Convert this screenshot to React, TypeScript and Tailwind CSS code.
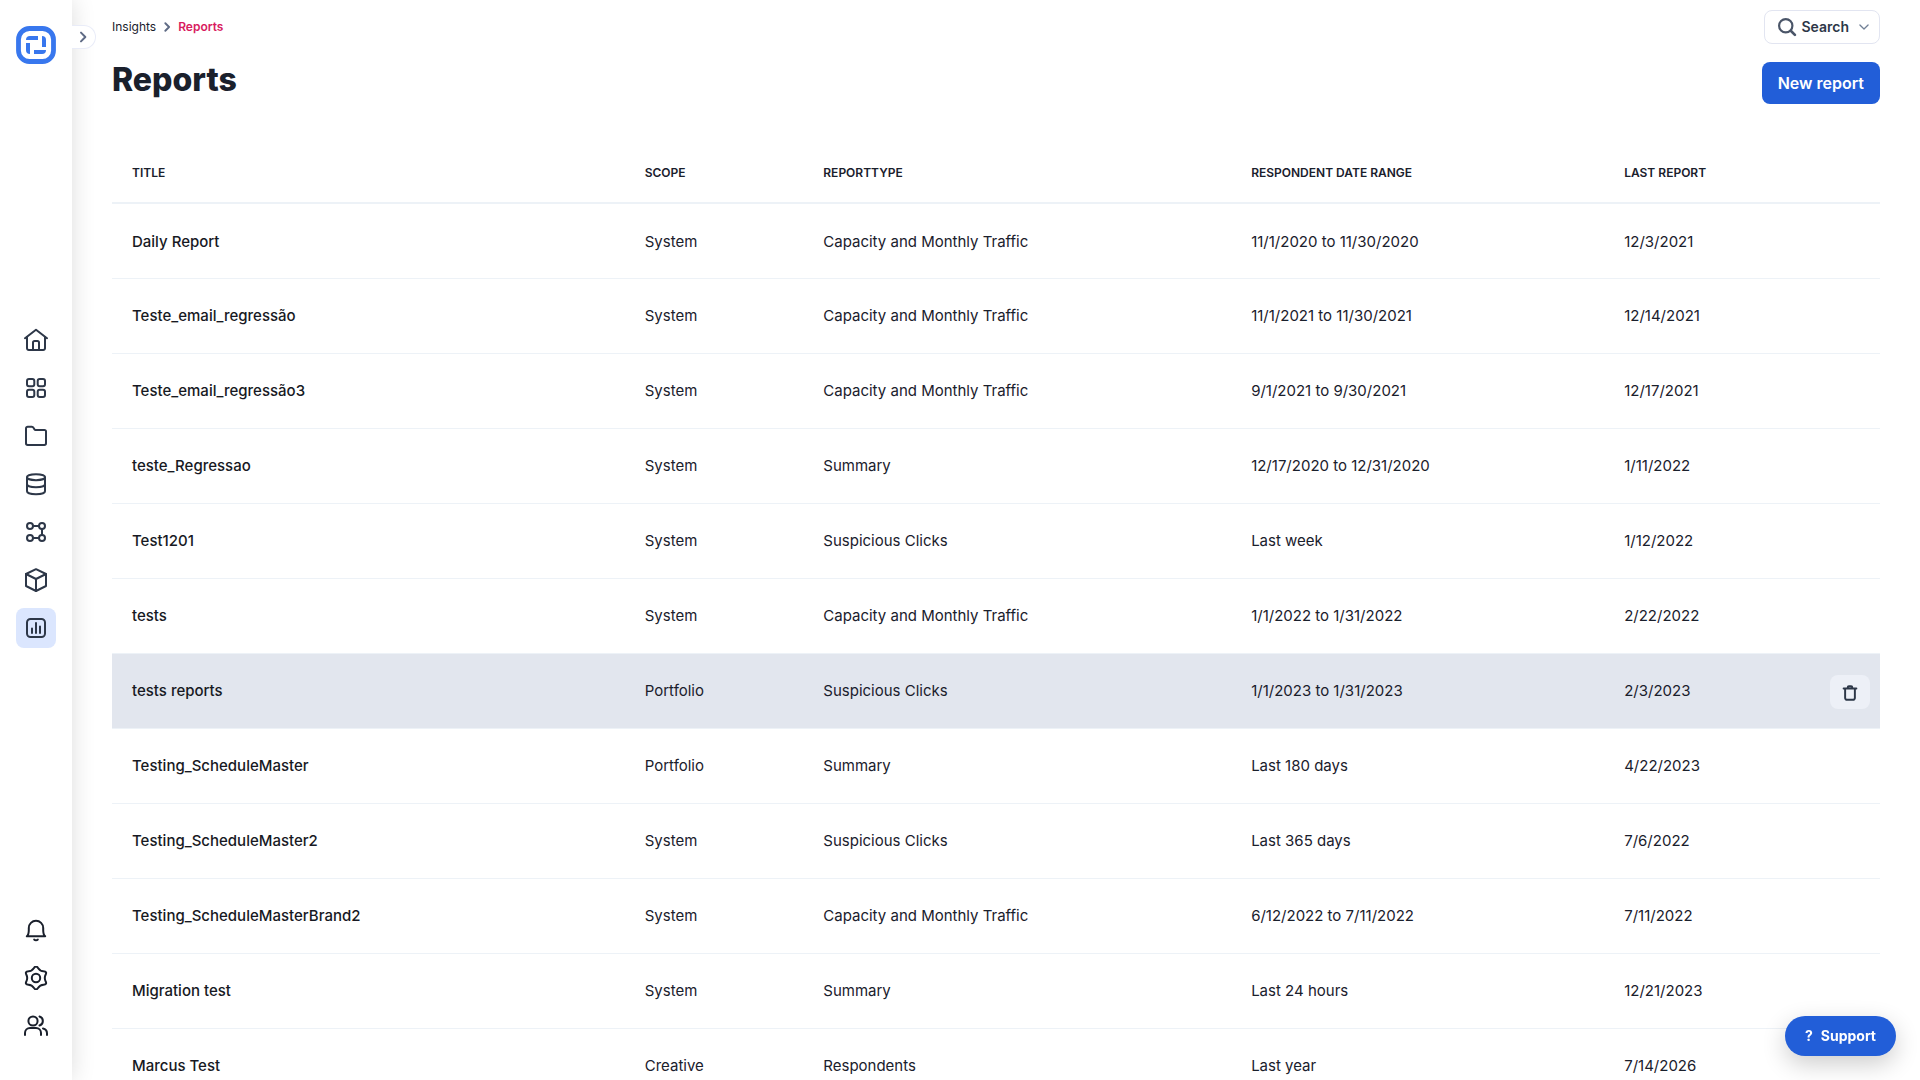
import type { ReactNode } from "react"

interface Report {
    title: string
    scope: string
    type: string
    range: string
    last: string
}

const reports: Report[] = [
    { title: "Daily Report", scope: "System", type: "Capacity and Monthly Traffic", range: "11/1/2020 to 11/30/2020", last: "12/3/2021" },
    { title: "Teste_email_regressão", scope: "System", type: "Capacity and Monthly Traffic", range: "11/1/2021 to 11/30/2021", last: "12/14/2021" },
    { title: "Teste_email_regressão3", scope: "System", type: "Capacity and Monthly Traffic", range: "9/1/2021 to 9/30/2021", last: "12/17/2021" },
    { title: "teste_Regressao", scope: "System", type: "Summary", range: "12/17/2020 to 12/31/2020", last: "1/11/2022" },
    { title: "Test1201", scope: "System", type: "Suspicious Clicks", range: "Last week", last: "1/12/2022" },
    { title: "tests", scope: "System", type: "Capacity and Monthly Traffic", range: "1/1/2022 to 1/31/2022", last: "2/22/2022" },
    { title: "tests reports", scope: "Portfolio", type: "Suspicious Clicks", range: "1/1/2023 to 1/31/2023", last: "2/3/2023" },
    { title: "Testing_ScheduleMaster", scope: "Portfolio", type: "Summary", range: "Last 180 days", last: "4/22/2023" },
    { title: "Testing_ScheduleMaster2", scope: "System", type: "Suspicious Clicks", range: "Last 365 days", last: "7/6/2022" },
    { title: "Testing_ScheduleMasterBrand2", scope: "System", type: "Capacity and Monthly Traffic", range: "6/12/2022 to 7/11/2022", last: "7/11/2022" },
    { title: "Migration test", scope: "System", type: "Summary", range: "Last 24 hours", last: "12/21/2023" },
    { title: "Marcus Test", scope: "Creative", type: "Respondents", range: "Last year", last: "7/14/2026" },
]

const activeReport = "tests reports"

function Icon({ children, className = "size-6" }: { children: ReactNode; className?: string }) {
    return (
        <svg
            viewBox="0 0 24 24"
            fill="none"
            stroke="currentColor"
            strokeWidth="2"
            strokeLinecap="round"
            strokeLinejoin="round"
            className={className}
            aria-hidden="true"
        >
            {children}
        </svg>
    )
}

const mainNav = [
    {
        label: "Home",
        icon: (
            <>
                <path d="M1 10.2 12 1.8l11 8.4" />
                <path d="M3 9v11.2A1.8 1.8 0 0 0 4.8 22h14.4a1.8 1.8 0 0 0 1.8-1.8V9" />
                <path d="M9 22v-7.4A1.6 1.6 0 0 1 10.6 13h2.8a1.6 1.6 0 0 1 1.6 1.6V22" />
            </>
        ),
    },
    {
        label: "Dashboards",
        icon: (
            <>
                <rect x="3" y="3" width="7.3" height="7.3" rx="2" />
                <rect x="13.7" y="3" width="7.3" height="7.3" rx="2" />
                <rect x="3" y="13.7" width="7.3" height="7.3" rx="2" />
                <rect x="13.7" y="13.7" width="7.3" height="7.3" rx="2" />
            </>
        ),
    },
    {
        label: "Folders",
        icon: <path d="M2 4.5a1.7 1.7 0 0 1 1.7-1.7h4.1a2 2 0 0 1 1.7 1l1 1.6a1.2 1.2 0 0 0 1 .5h8.8A1.7 1.7 0 0 1 22 7.6v11.7a1.7 1.7 0 0 1-1.7 1.7H3.7A1.7 1.7 0 0 1 2 19.3z" />,
    },
    {
        label: "Data",
        icon: (
            <>
                <ellipse cx="12" cy="5.2" rx="9" ry="3" />
                <path d="M3 5.2v14c0 1.7 4 3 9 3s9-1.3 9-3v-14" />
                <path d="M3 12.2c0 1.7 4 3 9 3s9-1.3 9-3" />
            </>
        ),
    },
    {
        label: "Flows",
        icon: (
            <>
                <circle cx="6" cy="6" r="3" />
                <circle cx="18" cy="6" r="3" />
                <circle cx="6" cy="18" r="3" />
                <circle cx="18" cy="18" r="3" />
                <path d="M9 6h6M9 18h6M18 9v6" />
            </>
        ),
    },
    {
        label: "Products",
        icon: (
            <>
                <path d="M12 1.2 22 6v12l-10 5-10-5V6z" />
                <path d="m2 6 10 5 10-5M12 11v12" />
            </>
        ),
    },
    {
        label: "Insights",
        active: true,
        icon: (
            <>
                <rect x="3" y="3" width="18" height="18" rx="3.5" />
                <path d="M8 12.5V17M12 7v10M16 10.5V17" />
            </>
        ),
    },
]

const footerNav = [
    {
        label: "Notifications",
        icon: (
            <>
                <path d="M2.8 18.3h18.4c-1.7-1.3-2-3.3-2-6.3v-2a7.2 7.2 0 0 0-14.4 0v2c0 3-.3 5-2 6.3z" />
                <path d="M10.2 21.6c.9 1 2.7 1 3.6 0" />
            </>
        ),
    },
    {
        label: "Settings",
        icon: (
            <>
                <circle cx="12" cy="12" r="4.2" />
                <path d="M14 2Q16 5 19.6 5.3Q23.3 5.5 21.6 8.8Q20 12 21.6 15.3Q23.3 18.500 19.600 18.700Q16 19 14 22Q12 25 10 22Q8 19 4.400 18.700Q.7 18.500 2.400 15.300Q4 12 2.400 8.800Q.7 5.500 4.400 5.300Q8 5 10 2Q12-1 14 2z" />
            </>
        ),
    },
    {
        label: "Users",
        icon: (
            <>
                <circle cx="9" cy="7" r="4.6" />
                <path d="M1 21v-2a5 5 0 0 1 5-5h6a5 5 0 0 1 5 5v2" />
                <path d="M15.5 2.5a4.7 4.7 0 0 1 0 9M19 14.5a5 5 0 0 1 4 4.8V21" />
            </>
        ),
    },
]

function Logo() {
    return (
        <svg viewBox="0 0 40 38" className="h-[38px] w-10" fill="none" aria-hidden="true">
            <rect x="2.5" y="2.5" width="35" height="33" rx="11" stroke="#3877ee" strokeWidth="4.8" />
            <g fill="#3877ee">
                <path d="M14 10h8v4H10a4 4 0 0 1 4-4z" />
                <path d="M26 10a4 4 0 0 1 4 4v7h-4z" />
                <path d="M10 17h4v11a4 4 0 0 1-4-4z" />
                <path d="M18 24h12a4 4 0 0 1-4 4h-8z" />
            </g>
        </svg>
    )
}

function Sidebar() {
    return (
        <aside className="relative z-10 flex w-[72px] shrink-0 flex-col items-center justify-between bg-white pt-[26px] pb-[34px] text-[#2d3748] shadow-[0_0_24px_rgba(0,0,0,0.14)]">
            <a href="#home" aria-label="Homepage">
                <Logo />
            </a>
            <nav aria-label="Main" className="flex flex-col gap-2 pb-1.5">
                {mainNav.map((item) => (
                    <a
                        key={item.label}
                        href="#nav"
                        aria-label={item.label}
                        className={`flex size-10 items-center justify-center rounded-lg ${item.active ? "bg-[#dbe6fe]" : ""}`}
                    >
                        <Icon>{item.icon}</Icon>
                    </a>
                ))}
            </nav>
            <div className="flex flex-col gap-2 text-[#1a202c]">
                {footerNav.map((item) => (
                    <button key={item.label} type="button" aria-label={item.label} className="flex size-10 items-center justify-center">
                        <Icon>{item.icon}</Icon>
                    </button>
                ))}
            </div>
            <button
                type="button"
                aria-label="Expand sidebar"
                className="absolute top-[25px] left-full flex h-6 w-6 items-center justify-center rounded-r-full border border-l-0 border-[#e9ecf8] bg-white pr-0.5 text-[#5f6b85]"
            >
                <Icon className="size-4">
                    <path d="m9 5.5 6.5 6.5L9 18.5" strokeWidth="3" />
                </Icon>
            </button>
        </aside>
    )
}

function ReportRow({ report, active }: { report: Report; active: boolean }) {
    return (
        <tr className={`h-[75px] border-b border-[#edf2f7] ${active ? "bg-[#e2e6ee]" : ""}`}>
            <td className="px-5 pt-0.5 font-medium text-[#171923]">{report.title}</td>
            <td className="px-5 pt-0.5">{report.scope}</td>
            <td className="px-5 pt-0.5">{report.type}</td>
            <td className="px-5 pt-0.5">{report.range}</td>
            <td className="pt-0.5 pr-2.5 pl-5">
                <div className="flex items-center justify-between">
                    {report.last}
                    {active && (
                        <button type="button" aria-label="Delete report" className="flex h-[34px] w-10 items-center justify-center rounded-lg bg-[#edf0f7] pt-0.5 text-[#2d3748]">
                            <Icon className="size-[18px]">
                                <path d="M3.5 6h17M9 6V4.5A1.5 1.5 0 0 1 10.5 3h3A1.5 1.5 0 0 1 15 4.5V6M5.5 6v12.5A2.5 2.5 0 0 0 8 21h8a2.5 2.5 0 0 0 2.5-2.5V6" strokeWidth="2.6" />
                            </Icon>
                        </button>
                    )}
                </div>
            </td>
        </tr>
    )
}

export default function App() {
    return (
        <div className="flex h-screen overflow-hidden bg-white font-[Inter,sans-serif] text-[#1a202c]">
            <Sidebar />
            <main className="min-w-0 flex-1 overflow-y-auto px-10 pt-2.5 [scrollbar-width:none]">
                <div className="flex items-center justify-between">
                    <nav aria-label="Breadcrumb" className="flex items-center gap-1.5 text-xs">
                        <a href="#insights">Insights</a>
                        <Icon className="size-2.5 text-[#5f6b85]">
                            <path d="m8 3 9 9-9 9" strokeWidth="4.5" />
                        </Icon>
                        <a href="#reports" aria-current="page" className="font-semibold text-[#d81b60]">
                            Reports
                        </a>
                    </nav>
                    <button type="button" className="flex h-[34px] items-center rounded-lg border border-[#e2e5f1] pr-2 pl-3 text-sm font-semibold text-[#2d3748]">
                        <Icon className="mr-1 size-5 text-[#4a5568]">
                            <circle cx="10.5" cy="10.5" r="8" strokeWidth="2.6" />
                            <path d="m16.5 16.5 5 5" strokeWidth="3.2" />
                        </Icon>
                        Search
                        <Icon className="ml-2 size-3.5 text-[#718096]">
                            <path d="m5 8.5 7 7 7-7" strokeWidth="2.2" />
                        </Icon>
                    </button>
                </div>

                <div className="mt-[18px] flex items-start justify-between">
                    <h1 className="text-[32px] leading-9 font-extrabold">Reports</h1>
                    <button type="button" className="h-[42px] rounded-lg bg-[#225ed8] px-4 text-base font-semibold text-white">
                        New report
                    </button>
                </div>

                <table className="mt-[38px] w-full table-fixed border-collapse text-left text-[15px]">
                    <thead>
                        <tr className="h-[61px] border-b-2 border-[#edf2f7] text-xs">
                            <th className="w-[29%] px-5 pt-0.5 font-semibold">TITLE</th>
                            <th className="w-[10.1%] px-5 pt-0.5 font-semibold">SCOPE</th>
                            <th className="w-[24.2%] px-5 pt-0.5 font-semibold">REPORTTYPE</th>
                            <th className="w-[21.1%] px-5 pt-0.5 font-semibold">RESPONDENT DATE RANGE</th>
                            <th className="px-5 pt-0.5 font-semibold">LAST REPORT</th>
                        </tr>
                    </thead>
                    <tbody>
                        {reports.map((report) => (
                            <ReportRow key={report.title} report={report} active={report.title === activeReport} />
                        ))}
                    </tbody>
                </table>
            </main>

            <button
                type="button"
                className="fixed right-6 bottom-6 z-20 flex h-10 items-center gap-2 rounded-full bg-[#225ed8] px-5 text-sm font-bold text-white shadow-[0_8px_24px_rgba(0,0,0,0.2)]"
            >
                <span>?</span>
                Support
            </button>
        </div>
    )
}
